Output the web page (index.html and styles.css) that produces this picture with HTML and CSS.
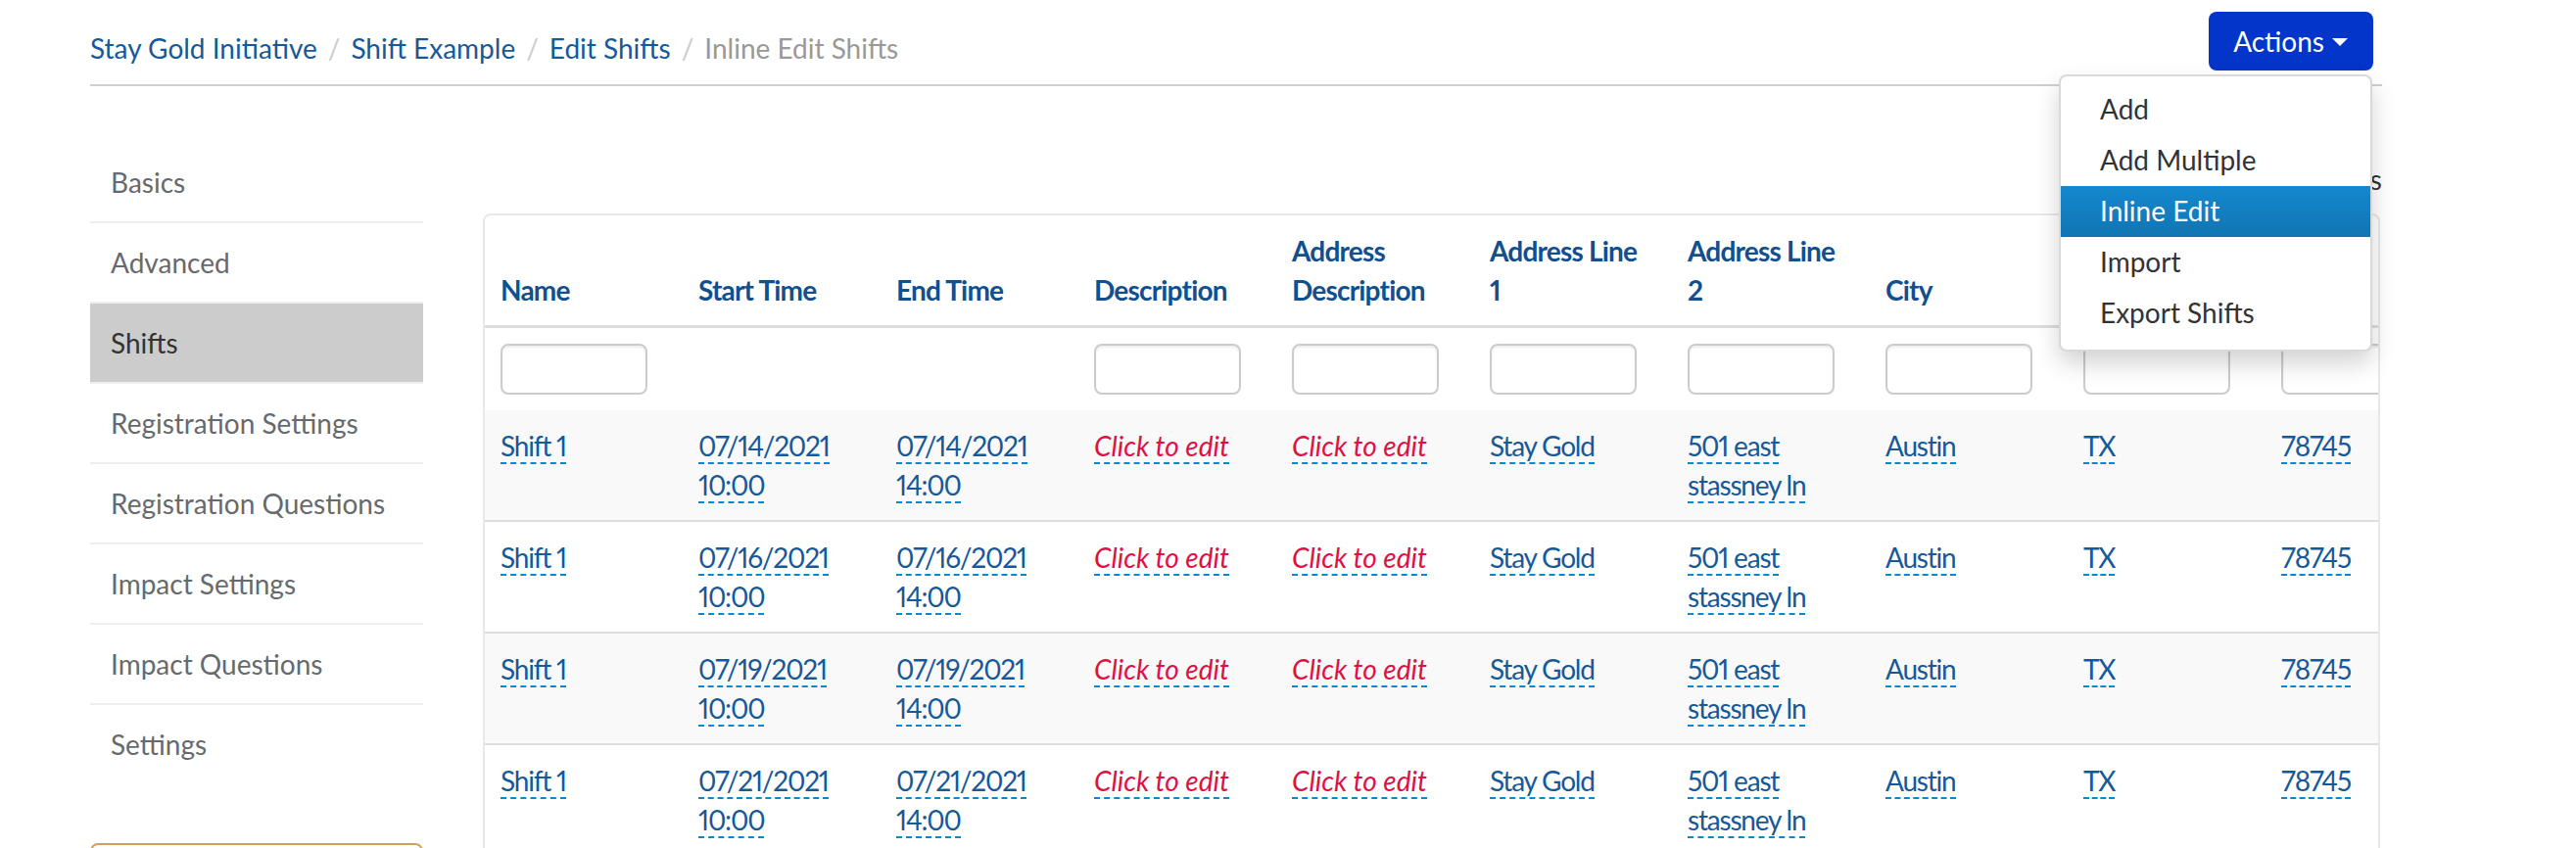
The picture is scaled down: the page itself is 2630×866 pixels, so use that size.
FILE: index.html
```html
<!DOCTYPE html>
<html lang="en">
<head>
<meta charset="utf-8">
<title>Inline Edit Shifts</title>
<link rel="stylesheet" href="styles.css">
</head>
<body>
<div class="page">
  <header class="topbar">
    <ol class="breadcrumb">
      <li><a href="#">Stay Gold Initiative</a></li>
      <li class="sep">/</li>
      <li><a href="#">Shift Example</a></li>
      <li class="sep">/</li>
      <li><a href="#">Edit Shifts</a></li>
      <li class="sep">/</li>
      <li class="current">Inline Edit Shifts</li>
    </ol>
    <div class="actions">
      <button class="btn-actions" type="button">Actions<span class="caret"></span></button>
      <ul class="menu">
        <li><a href="#">Add</a></li>
        <li><a href="#">Add Multiple</a></li>
        <li class="active"><a href="#">Inline Edit</a></li>
        <li><a href="#">Import</a></li>
        <li><a href="#">Export Shifts</a></li>
      </ul>
    </div>
  </header>

  <div class="main">
    <nav class="sidebar">
      <a class="side-item" href="#">Basics</a>
      <a class="side-item" href="#">Advanced</a>
      <a class="side-item selected" href="#">Shifts</a>
      <a class="side-item" href="#">Registration Settings</a>
      <a class="side-item" href="#">Registration Questions</a>
      <a class="side-item" href="#">Impact Settings</a>
      <a class="side-item" href="#">Impact Questions</a>
      <a class="side-item" href="#">Settings</a>
      <div class="side-cta"></div>
    </nav>

    <section class="content">
      <div class="toolbar">Columns</div>
      <div class="panel">
        <table class="grid">
          <thead>
            <tr>
              <th>Name</th>
              <th>Start Time</th>
              <th>End Time</th>
              <th>Description</th>
              <th><span class="hl">Address</span><span class="hl">Description</span></th>
              <th><span class="hl">Address Line</span><span class="hl">1</span></th>
              <th><span class="hl">Address Line</span><span class="hl">2</span></th>
              <th>City</th>
              <th>State</th>
              <th>Zip</th>
            </tr>
            <tr class="filters">
              <td><input class="filter" type="text"></td>
              <td></td>
              <td></td>
              <td><input class="filter" type="text"></td>
              <td><input class="filter" type="text"></td>
              <td><input class="filter" type="text"></td>
              <td><input class="filter" type="text"></td>
              <td><input class="filter" type="text"></td>
              <td><input class="filter" type="text"></td>
              <td><input class="filter" type="text"></td>
            </tr>
          </thead>
          <tbody>
            <tr>
              <td><a class="ed" href="#">Shift 1</a></td>
              <td><a class="ed" href="#">07/14/2021<br>10:00</a></td>
              <td><a class="ed" href="#">07/14/2021<br>14:00</a></td>
              <td><a class="ed empty" href="#">Click to edit</a></td>
              <td><a class="ed empty" href="#">Click to edit</a></td>
              <td><a class="ed" href="#">Stay Gold</a></td>
              <td><a class="ed" href="#">501 east<br>stassney ln</a></td>
              <td><a class="ed" href="#">Austin</a></td>
              <td><a class="ed" href="#">TX</a></td>
              <td><a class="ed" href="#">78745</a></td>
            </tr>
            <tr>
              <td><a class="ed" href="#">Shift 1</a></td>
              <td><a class="ed" href="#">07/16/2021<br>10:00</a></td>
              <td><a class="ed" href="#">07/16/2021<br>14:00</a></td>
              <td><a class="ed empty" href="#">Click to edit</a></td>
              <td><a class="ed empty" href="#">Click to edit</a></td>
              <td><a class="ed" href="#">Stay Gold</a></td>
              <td><a class="ed" href="#">501 east<br>stassney ln</a></td>
              <td><a class="ed" href="#">Austin</a></td>
              <td><a class="ed" href="#">TX</a></td>
              <td><a class="ed" href="#">78745</a></td>
            </tr>
            <tr>
              <td><a class="ed" href="#">Shift 1</a></td>
              <td><a class="ed" href="#">07/19/2021<br>10:00</a></td>
              <td><a class="ed" href="#">07/19/2021<br>14:00</a></td>
              <td><a class="ed empty" href="#">Click to edit</a></td>
              <td><a class="ed empty" href="#">Click to edit</a></td>
              <td><a class="ed" href="#">Stay Gold</a></td>
              <td><a class="ed" href="#">501 east<br>stassney ln</a></td>
              <td><a class="ed" href="#">Austin</a></td>
              <td><a class="ed" href="#">TX</a></td>
              <td><a class="ed" href="#">78745</a></td>
            </tr>
            <tr>
              <td><a class="ed" href="#">Shift 1</a></td>
              <td><a class="ed" href="#">07/21/2021<br>10:00</a></td>
              <td><a class="ed" href="#">07/21/2021<br>14:00</a></td>
              <td><a class="ed empty" href="#">Click to edit</a></td>
              <td><a class="ed empty" href="#">Click to edit</a></td>
              <td><a class="ed" href="#">Stay Gold</a></td>
              <td><a class="ed" href="#">501 east<br>stassney ln</a></td>
              <td><a class="ed" href="#">Austin</a></td>
              <td><a class="ed" href="#">TX</a></td>
              <td><a class="ed" href="#">78745</a></td>
            </tr>
          </tbody>
        </table>
      </div>
    </section>
  </div>
</div>
</body>
</html>
```

FILE: styles.css
```css
html, body {
  margin: 0;
  padding: 0;
  background: #fff;
}

body {
  font-family: Lato, "Open Sans", "Liberation Sans", sans-serif;
  font-size: 28px;
  line-height: 40px;
  color: #333;
  overflow: hidden;
}

a {
  text-decoration: none;
}

.page {
  padding: 0 198px 0 92px;
}

/* ---------- top bar ---------- */
.topbar {
  display: flex;
  justify-content: space-between;
  align-items: flex-start;
  height: 86px;
  border-bottom: 2px solid #cfcfcf;
}

.breadcrumb {
  display: flex;
  gap: 11px;
  list-style: none;
  margin: 29px 0 0 0;
  padding: 0;
}

.breadcrumb a {
  color: #15599b;
}

.breadcrumb .sep {
  color: #cccccc;
}

.breadcrumb .current {
  color: #999999;
}

.actions {
  position: relative;
  margin: 12px 9px 0 0;
}

.btn-actions {
  display: flex;
  align-items: center;
  gap: 8px;
  height: 60px;
  padding: 0 26px 0 25px;
  border: 0;
  border-radius: 8px;
  background: #0335cb;
  color: #fff;
  font-family: inherit;
  font-size: 28px;
  line-height: 40px;
}

.caret {
  display: inline-block;
  width: 0;
  height: 0;
  border-top: 8px solid #fff;
  border-left: 8px solid transparent;
  border-right: 8px solid transparent;
  margin-top: 2px;
}

.menu {
  position: absolute;
  top: 64px;
  right: 1px;
  z-index: 10;
  width: 320px;
  box-sizing: border-box;
  margin: 0;
  padding: 8px 0 11px;
  list-style: none;
  background: #fff;
  border: 2px solid rgba(0, 0, 0, 0.15);
  border-radius: 8px;
  box-shadow: 0 12px 24px rgba(0, 0, 0, 0.175);
}

.menu a {
  display: block;
  padding: 5px 40px 7px;
  color: #333;
  line-height: 40px;
}

.menu .active a {
  color: #fff;
  background: linear-gradient(to bottom, #1488cf, #1075b3);
}

/* ---------- main ---------- */
.main {
  display: flex;
  align-items: flex-start;
  margin-top: 58px;
}

.sidebar {
  flex: none;
  width: 340px;
  display: flex;
  flex-direction: column;
}

.side-item {
  display: block;
  padding: 20px 21px;
  color: #666a6e;
  border-bottom: 2px solid #eeeeee;
}

.side-item:last-of-type {
  border-bottom: 0;
}

.side-item.selected {
  background: #cccccc;
  color: #333;
}

.side-cta {
  margin-top: 61px;
  height: 60px;
  border: 2px solid #c9a35e;
  border-radius: 8px;
}

.content {
  flex: 1;
  min-width: 0;
  margin-left: 61px;
}

.toolbar {
  margin-top: 17px;
  height: 40px;
  margin-bottom: 15px;
  text-align: right;
  color: #333;
}

.panel {
  margin-right: 2px;
  border: 2px solid #e8e8e8;
  border-bottom: 0;
  border-radius: 8px 8px 0 0;
  overflow: hidden;
  height: 700px;
}

/* ---------- table ---------- */
.grid {
  border-collapse: collapse;
  table-layout: fixed;
  width: 2020px;
  font-variant-numeric: proportional-nums;
}

.grid th,
.grid td {
  width: 170px;
  padding: 16px;
  text-align: left;
  vertical-align: top;
  line-height: 40px;
}

.grid th {
  vertical-align: bottom;
  font-weight: 700;
  color: #114f8e;
  letter-spacing: -0.8px;
  border-bottom: 3px solid #dddddd;
}

.grid th .hl {
  display: block;
}

.grid .filters td {
  vertical-align: middle;
}

.filter {
  display: block;
  box-sizing: border-box;
  width: 150px;
  height: 52px;
  margin: 0;
  border: 2px solid #cccccc;
  border-radius: 8px;
  box-shadow: inset 0 2px 2px rgba(0, 0, 0, 0.075);
  background: #fff;
}

.grid tbody tr + tr {
  border-top: 2px solid #dddddd;
}

.grid tbody tr:nth-child(odd) {
  background: #f9f9f9;
}

.ed {
  color: #15599b;
  letter-spacing: -1.2px;
  border-bottom: 2px dashed #0a88cc;
}

.ed.empty {
  color: #dd1144;
  font-style: italic;
  letter-spacing: 0;
}
```
